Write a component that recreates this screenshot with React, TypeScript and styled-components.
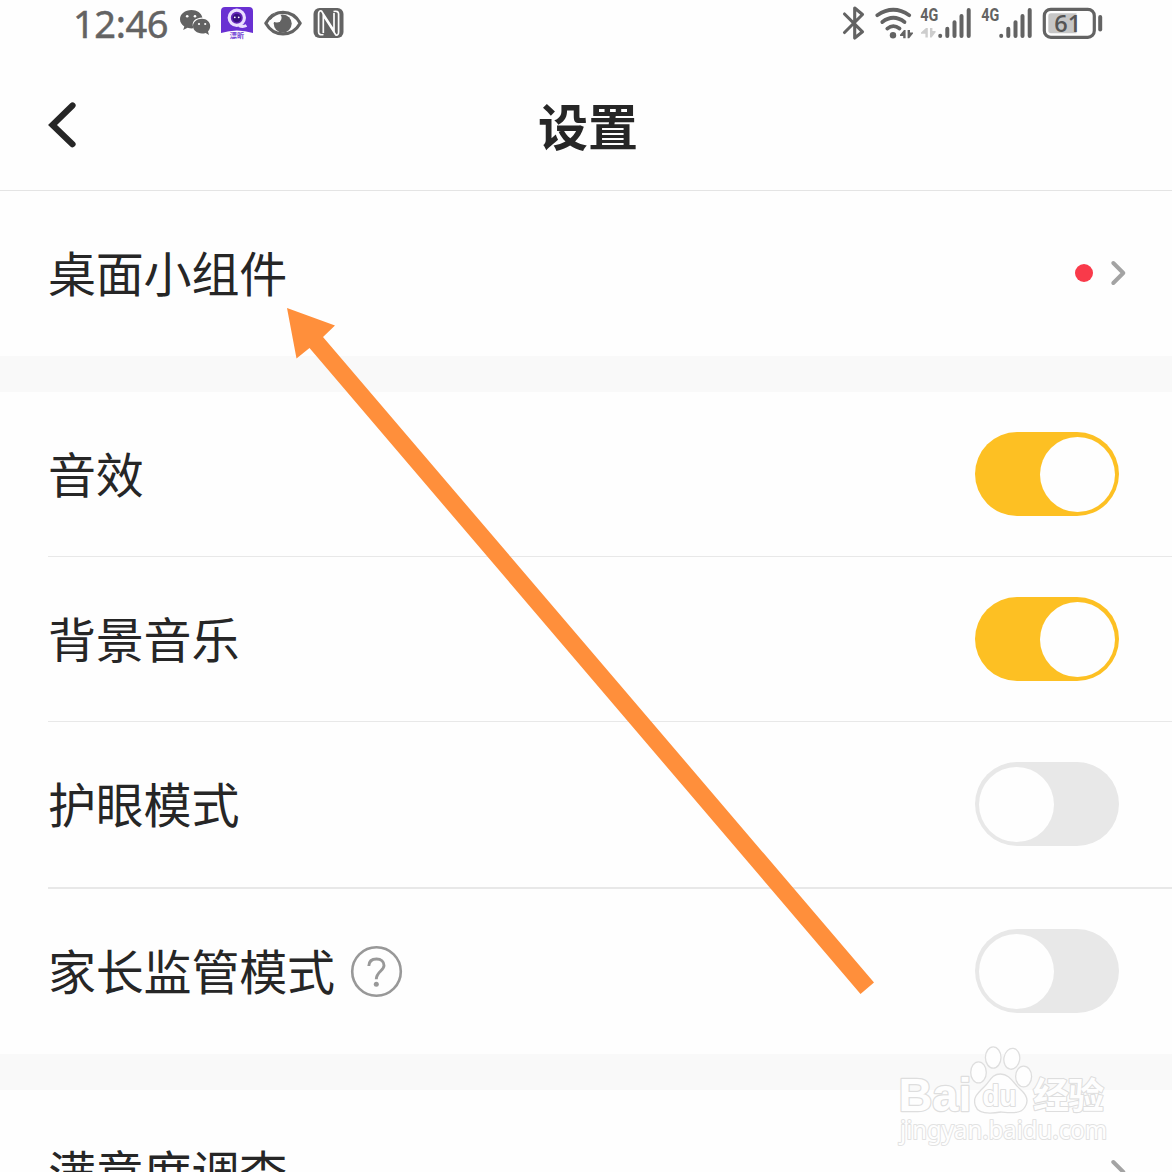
import React, { useState } from "react";
import styled, { createGlobalStyle } from "styled-components";

const GlobalStyle = createGlobalStyle`
  * { box-sizing: border-box; }
  body {
    margin: 0;
    background: #fefefe;
    color: #262626;
    font-family: "Noto Sans", "Noto Sans CJK SC", sans-serif;
  }
`;

const Screen = styled.main`
  position: relative;
  width: 1172px;
  height: 1172px;
  overflow: hidden;
  display: flex;
  flex-direction: column;
  background: #fefefe;
`;

const StatusBar = styled.div`
  flex: none;
  height: 48px;
  display: flex;
  justify-content: space-between;
  padding: 0 69px 0 73px;
`;

const StatusGroup = styled.div`
  display: flex;
  height: 48px;
`;

const Clock = styled.time`
  width: 107px;
  font: 400 38px/47px "Noto Sans", sans-serif;
  letter-spacing: -0.4px;
  color: #636363;
  -webkit-text-stroke: 0.5px #636363;
  white-space: nowrap;
`;

const StatusIcon = styled.svg<{ $gap?: number }>`
  display: block;
  flex: none;
  height: 48px;
  margin-left: ${(p) => p.$gap ?? 0}px;
`;

const Header = styled.header`
  flex: none;
  height: 143px;
  display: grid;
  grid-template-columns: 96px 1fr 92px;
  align-items: center;
  padding-top: 9px;
  border-bottom: 1px solid #e4e4e4;
`;

const BackButton = styled.button`
  height: 60px;
  padding: 0 0 0 44px;
  border: 0;
  background: none;
  display: flex;
  align-items: center;
`;

const Title = styled.h1`
  margin: 0;
  text-align: center;
  font: 700 50px/72px "Noto Sans CJK SC", sans-serif;
`;

const Section = styled.section`
  flex: none;
  display: flex;
  flex-direction: column;
  padding-left: 48px;
`;

const Row = styled.div<{ $height?: number; $line?: number }>`
  flex: none;
  height: ${(p) => p.$height ?? 165}px;
  display: flex;
  align-items: center;
  justify-content: space-between;
  padding-right: 44px;
  padding-bottom: ${(p) => (p.$line === 1 ? 0 : 1)}px;
  border-bottom: ${(p) => p.$line ?? 0}px solid #e8e8e8;
`;

const Label = styled.div`
  display: flex;
  align-items: center;
  gap: 15px;
`;

const LabelText = styled.span`
  padding-bottom: 5px;
  font: 400 48px/70px "Noto Sans CJK SC", sans-serif;
  letter-spacing: -0.2px;
`;

const Divider = styled.div`
  flex: none;
  height: 36px;
  background: #f9f9f9;
`;

const Trailing = styled.div`
  display: flex;
  align-items: center;
  gap: 17px;
`;

const Dot = styled.span`
  width: 18px;
  height: 18px;
  border-radius: 50%;
  background: #f93a4a;
`;

const Track = styled.button<{ $on: boolean }>`
  width: 144px;
  height: 84px;
  margin-right: 9px;
  padding: ${(p) => (p.$on ? "0 4px 0 0" : "0 0 0 4px")};
  border: 0;
  border-radius: 42px;
  display: flex;
  align-items: center;
  justify-content: ${(p) => (p.$on ? "flex-end" : "flex-start")};
  background: ${(p) => (p.$on ? "#fdc023" : "#e8e8e8")};
`;

const Knob = styled.span`
  width: 75px;
  height: 75px;
  border-radius: 50%;
  background: #fefefe;
`;

const Overlay = styled.svg`
  position: absolute;
  inset: 0;
  pointer-events: none;
`;

function Chevron() {
  return (
    <svg width="18" height="28" viewBox="0 0 18 28" fill="none">
      <path d="M3.3 4 L13.3 14 L3.3 24" stroke="#a3a3a3" strokeWidth="4" strokeLinecap="round" strokeLinejoin="round" />
    </svg>
  );
}

function Switch({ initial = false, label }: { initial?: boolean; label: string }) {
  const [on, setOn] = useState(initial);
  return (
    <Track $on={on} role="switch" aria-checked={on} aria-label={label} onClick={() => setOn(!on)}>
      <Knob />
    </Track>
  );
}

function HelpIcon() {
  return (
    <svg width="54" height="54" viewBox="0 0 54 54" fill="none" stroke="#989898">
      <circle cx="26.5" cy="27.5" r="24.3" strokeWidth="2.6" />
      <path d="M18.8 22 C19 17.3 22 15 26.5 15 C31.1 15 34 17.7 34 21.5 C34 26.7 26.3 27.7 26.3 35.3" strokeWidth="2.9" />
      <circle cx="26.3" cy="40.3" r="2.5" fill="#989898" stroke="none" />
    </svg>
  );
}

function WeChat() {
  return (
    <StatusIcon width="31" viewBox="180 0 31 48" fill="#636363">
      <path d="M191.5 10 C185 10 180 14.1 180 19.2 C180 22.2 181.7 24.7 184.3 26.4 L183.2 30 L187.5 27.8 C189 28.3 190.5 28.4 192 28.4 L193.5 28 C190.8 22.2 195.2 17.8 202.4 17.6 C201.5 13 197 10 191.5 10Z" />
      <path d="M202 18.8 C196.7 18.8 193 22.2 193 26.1 C193 30.4 197 33.5 202 33.5 C203.3 33.5 204.6 33.2 205.7 32.9 L209 35 L208 31.6 C209.3 30.2 210.2 28.2 210.2 26.1 C210.2 22.2 206.8 18.8 202 18.8Z" />
      <g fill="#fefefe">
        <circle cx="187.2" cy="16.3" r="1.3" />
        <circle cx="195" cy="16.3" r="1.3" />
        <circle cx="199" cy="24" r="1.1" />
        <circle cx="205.2" cy="24" r="1.1" />
      </g>
    </StatusIcon>
  );
}

function PurpleApp() {
  return (
    <StatusIcon width="33" viewBox="221 0 33 48" $gap={10}>
      <path d="M221 33 V11 Q221 7 225 7 H249 Q253 7 253 11 V33 Q237 28 221 33Z" fill="#6930d2" />
      <circle cx="236.8" cy="17.8" r="7.6" fill="#6225b8" stroke="#eadfff" strokeWidth="3.2" />
      <path d="M239 25.7 Q243 27.3 246.5 25.5" stroke="#eadfff" strokeWidth="3" fill="none" />
      <circle cx="236.8" cy="18" r="4.3" fill="#36107e" />
      <circle cx="234.8" cy="17.3" r="0.9" fill="#fff" />
      <circle cx="238.7" cy="17.3" r="0.9" fill="#fff" />
      <text x="237" y="37.5" fontSize="7.2" fontWeight="700" fill="#7447d5" textAnchor="middle" fontFamily="Noto Sans CJK SC, sans-serif">漂昕</text>
    </StatusIcon>
  );
}

function Eye() {
  return (
    <StatusIcon width="40" viewBox="263 0 40 48" $gap={9}>
      <path d="M265.8 23.2 C274 8.8 292 8.8 300.2 23.2 C292 37.5 274 37.5 265.8 23.2Z" fill="none" stroke="#636363" strokeWidth="3.2" strokeLinejoin="round" />
      <circle cx="282.7" cy="23.6" r="9" fill="#636363" />
      <circle cx="276.8" cy="17.8" r="4.8" fill="#fefefe" />
      <path d="M269.5 19 C273 15.2 277 13 281 12.5" fill="none" stroke="#636363" strokeWidth="2.6" />
    </StatusIcon>
  );
}

function Nfc() {
  return (
    <StatusIcon width="32" viewBox="313 0 32 48" $gap={10} fill="none">
      <rect x="313.5" y="8" width="30" height="30" rx="6" fill="#636363" />
      <path d="M323.5 34.5 Q318.6 35.5 318.6 32 V14 Q318.6 10.5 321.5 11 L334 30.5 V13" stroke="#fefefe" strokeWidth="1.7" />
      <path d="M333.5 11.5 Q338.6 10.5 338.6 14 V32 Q338.6 35.5 335.8 35 L323.3 15.5 V33" stroke="#fefefe" strokeWidth="1.7" />
    </StatusIcon>
  );
}

function Bluetooth() {
  return (
    <StatusIcon width="24" viewBox="842 0 24 48" fill="none">
      <path d="M844.5 14 L862.5 31.8 L854.7 38 V8 L862.5 14.5 L844.5 32.5" stroke="#636363" strokeWidth="3.1" strokeLinejoin="round" strokeLinecap="round" />
    </StatusIcon>
  );
}

function Wifi() {
  return (
    <StatusIcon width="39" viewBox="875 0 39 48" $gap={9} fill="none" stroke="#636363" strokeWidth="3.8" strokeLinecap="round">
      <path d="M877.3 15.2 Q893.3 4.4 909.2 15.2" />
      <path d="M882.3 22 Q893.3 13.6 904.5 22" />
      <path d="M887.3 28.6 Q893.3 23.6 899.5 28.6" />
      <circle cx="893" cy="35.2" r="3.2" fill="#636363" stroke="none" />
      <path d="M905.6 30 V38.3 H903.2 V36 H900 V34.8 L904 30Z M907.6 30 H910 V32.4 H913 V33.6 L909.2 38.3 H907.6Z" fill="#636363" stroke="none" />
    </StatusIcon>
  );
}

function Signal({ data = false, gap }: { data?: boolean; gap: number }) {
  return (
    <StatusIcon width="52" viewBox="920 0 52 48" $gap={gap} fill="none" stroke="#636363" strokeWidth="4" strokeLinecap="round">
      <text x="920.3" y="21.3" fontSize="18" fontWeight="700" fill="#636363" stroke="none" textLength="18" lengthAdjust="spacingAndGlyphs" fontFamily="Roboto, sans-serif">4G</text>
      {data && <path d="M927.8 28 V37.5 H925.4 V33.8 H921 V32.4 L926 28Z M930 28 H932.4 V31 H935.6 V32.2 L931.6 37.5 H930Z" fill="#cdcdcd" stroke="none" />}
      <path d="M940.2 35.8 V36 M947.3 28.8 V36 M954.5 22.2 V36 M961.5 16 V36 M968.7 10 V36" />
    </StatusIcon>
  );
}

function Battery() {
  return (
    <StatusIcon width="61" viewBox="1043 0 61 48" $gap={9}>
      <rect x="1045.3" y="9.3" width="50" height="28" rx="6.5" fill="none" stroke="#636363" strokeWidth="3.2" />
      <path d="M1052 13.3 H1077.5 V33.3 H1052 Q1049.3 33.3 1049.3 30.5 V16 Q1049.3 13.3 1052 13.3Z" fill="#c6c6c6" />
      <path d="M1101.2 17 V29.5" stroke="#636363" strokeWidth="4" strokeLinecap="round" />
      <text x="1068.8" y="31.8" fontSize="23.5" fontWeight="600" fill="#555" textAnchor="middle" fontFamily="Open Sans, sans-serif">61</text>
    </StatusIcon>
  );
}

function Watermark() {
  return (
    <g fill="#fefefe" stroke="#dedede" strokeWidth="1.3" strokeLinejoin="round">
      <text x="898.5" y="1111" fontSize="46" fontFamily="Liberation Sans, sans-serif" fontWeight="700" strokeWidth="2.4" paintOrder="stroke" textLength="73" lengthAdjust="spacingAndGlyphs">Bai</text>
      <ellipse cx="978.5" cy="1072.4" rx="7.8" ry="10.5" />
      <ellipse cx="993.2" cy="1057.5" rx="7.8" ry="10.6" />
      <ellipse cx="1011.8" cy="1058.8" rx="7.9" ry="10.5" transform="rotate(9 1011.8 1058.8)" />
      <ellipse cx="1023.6" cy="1076.5" rx="8" ry="10.3" />
      <path d="M1000.5 1074 C1010 1074 1013 1083 1020 1089 C1027 1095 1029 1101 1025 1107 C1021 1114 1012 1113 1001 1112 C989 1114 978 1114 975.5 1106 C972 1097 979 1092 985 1086 C990 1081 992 1074 1000.5 1074Z" />
      <text x="982.5" y="1106" fontSize="29" fontFamily="Liberation Sans, sans-serif" fontWeight="700" strokeWidth="2.2" paintOrder="stroke" textLength="34" lengthAdjust="spacingAndGlyphs">du</text>
      <text x="1033" y="1108.5" fontSize="36" fontFamily="Noto Sans CJK SC, sans-serif" fontWeight="700" strokeWidth="2.2" paintOrder="stroke" textLength="71">经验</text>
      <text x="900" y="1139" fontSize="25" fontFamily="Noto Sans, sans-serif" fontWeight="400" strokeWidth="2" stroke="#e2e2e2" paintOrder="stroke" textLength="207" lengthAdjust="spacingAndGlyphs">jingyan.baidu.com</text>
    </g>
  );
}

export default function App() {
  return (
    <>
      <GlobalStyle />
      <Screen>
        <StatusBar>
          <StatusGroup>
            <Clock>12:46</Clock>
            <WeChat />
            <PurpleApp />
            <Eye />
            <Nfc />
          </StatusGroup>
          <StatusGroup>
            <Bluetooth />
            <Wifi />
            <Signal data gap={6} />
            <Signal gap={9} />
            <Battery />
          </StatusGroup>
        </StatusBar>
        <Header>
          <BackButton aria-label="返回">
            <svg width="36" height="52" viewBox="0 0 36 52" fill="none">
              <path d="M28.5 7.5 L8.5 27 L28.5 46.2" stroke="#262626" strokeWidth="6.2" strokeLinecap="round" />
            </svg>
          </BackButton>
          <Title>设置</Title>
        </Header>
        <Section>
          <Row>
            <Label><LabelText>桌面小组件</LabelText></Label>
            <Trailing><Dot /><Chevron /></Trailing>
          </Row>
        </Section>
        <Divider />
        <Section>
          <Row $line={1}><Label><LabelText>音效</LabelText></Label><Switch initial label="音效" /></Row>
          <Row $line={1}><Label><LabelText>背景音乐</LabelText></Label><Switch initial label="背景音乐" /></Row>
          <Row $line={2} $height={167}><Label><LabelText>护眼模式</LabelText></Label><Switch label="护眼模式" /></Row>
          <Row><Label><LabelText>家长监管模式</LabelText><HelpIcon /></Label><Switch label="家长监管模式" /></Row>
        </Section>
        <Divider />
        <Section>
          <Row><Label><LabelText>满意度调查</LabelText></Label><Chevron /></Row>
        </Section>
        <Overlay width="1172" height="1172" viewBox="0 0 1172 1172">
          <path d="M287 308 L335 325.5 L323 337 L874 982.5 L860.5 994 L309.5 348 L296.5 358.5Z" fill="#ff8f3b" />
          <Watermark />
        </Overlay>
      </Screen>
    </>
  );
}
